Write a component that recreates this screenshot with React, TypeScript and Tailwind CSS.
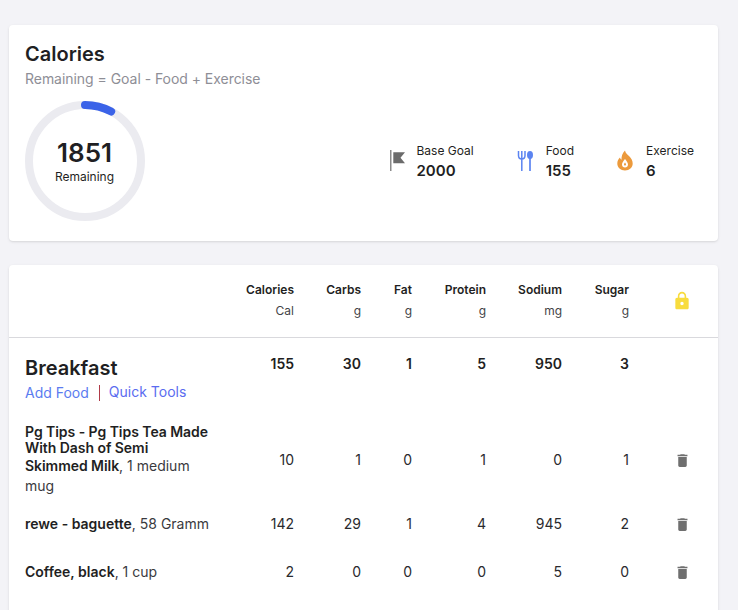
const rows = [
  { bold: 'Pg Tips - Pg Tips Tea Made With Dash of Semi Skimmed Milk', rest: ', 1 medium mug', vals: [10, 1, 0, 1, 0, 1] },
  { bold: 'rewe - baguette', rest: ', 58 Gramm', vals: [142, 29, 1, 4, 945, 2] },
  { bold: 'Coffee, black', rest: ', 1 cup', vals: [2, 0, 0, 0, 5, 0] },
];

const headers = [
  { label: 'Calories', unit: 'Cal' },
  { label: 'Carbs', unit: 'g' },
  { label: 'Fat', unit: 'g' },
  { label: 'Protein', unit: 'g' },
  { label: 'Sodium', unit: 'mg' },
  { label: 'Sugar', unit: 'g' },
];

const totals = [155, 30, 1, 5, 950, 3];
const gridCols = 'grid grid-cols-[221px_48px_67px_51px_74px_76px_67px_1fr]';

function FlagIcon() {
  return (
    <svg width="16" height="22" viewBox="0 0 16 22" className="shrink-0">
      <rect x="0" y="0" width="1.500" height="21" fill="#8a8a8a" />
      <path d="M3.300 2.300H15l-4.500 5.500 4.500 5.500H3.300z" fill="#6b6b6b" />
    </svg>
  );
}

function ForkIcon() {
  return (
    <svg width="18" height="22" viewBox="0 0 18 22" className="shrink-0" fill="none" stroke="#5b84f1" strokeWidth="1.500">
      <path d="M1.500 1v4.500c0 2.100 1.400 3.500 3.300 3.500S8 7.600 8 5.500V1M4.800 1v20" />
      <path d="M13 8v13" strokeWidth="1.700" />
      <ellipse cx="13" cy="5" rx="3" ry="4" fill="#5b84f1" stroke="none" />
    </svg>
  );
}

function FlameIcon() {
  return (
    <svg width="18" height="22" viewBox="0 0 18 22" className="shrink-0">
      <path
        fillRule="evenodd"
        d="M8 .5c.5 2.500 2 3.500 4 5.500 2.300 2.300 3.700 4.500 3.700 7.500 0 4-3.300 7-7.700 7S.3 17.500.3 13.500c0-2.500 1-4.500 2.700-6 .2 1 .6 1.800 1.500 2.200C4.300 6.200 5.500 3 8 .5zM8 9c-1.700 2.300-3 3.600-3 5.500 0 1.800 1.300 3 3 3s3-1.200 3-3c0-1.900-1.300-3.200-3-5.500zm0 3.500c-.6.800-1 1.300-1 2 0 .6.400 1 1 1s1-.4 1-1c0-.7-.4-1.200-1-2z"
        fill="#ec9a3c"
      />
    </svg>
  );
}

function LockIcon() {
  return (
    <svg width="20" height="20" viewBox="0 0 24 24" fill="#f8dc3d">
      <path d="M18 8h-1V6c0-2.760-2.240-5-5-5S7 3.240 7 6v2H6c-1.100 0-2 .9-2 2v10c0 1.100.9 2 2 2h12c1.100 0 2-.9 2-2V10c0-1.100-.9-2-2-2zm-6 9c-1.100 0-2-.9-2-2s.9-2 2-2 2 .9 2 2-.9 2-2 2zm3.100-9H8.900V6c0-1.710 1.390-3.100 3.100-3.100 1.710 0 3.100 1.390 3.100 3.100v2z" />
    </svg>
  );
}

function TrashIcon() {
  return (
    <svg width="17" height="17" viewBox="0 0 24 24" fill="#6f6f6f">
      <path d="M6 19c0 1.100.9 2 2 2h8c1.100 0 2-.9 2-2V7H6v12zM19 4h-3.500l-1-1h-5l-1 1H5v2h14V4z" />
    </svg>
  );
}

function Stat({ icon, label, value }: { icon: React.ReactNode; label: string; value: number }) {
  return (
    <div className="flex items-center gap-[11px]">
      {icon}
      <div>
        <div className="text-xs leading-5 text-[#1f1f23]">{label}</div>
        <div className="text-[15px] leading-5 font-semibold text-[#1f1f23]">{value}</div>
      </div>
    </div>
  );
}

export default function App() {
  return (
    <div
      className="h-screen overflow-hidden bg-[#f3f3f7] pt-[25px] pr-5 pl-[9px] text-[#1f1f23]"
      style={{ fontFamily: 'Inter, sans-serif' }}
    >
      <div className="h-[216px] rounded bg-white px-4 pt-[17px] shadow-sm">
        <h2 className="text-xl leading-6 font-semibold">Calories</h2>
        <p className="mt-[3px] text-sm leading-5 tracking-[-0.04px] text-[#8e8e96]">Remaining = Goal - Food + Exercise</p>
        <div className="mt-3 flex items-center pr-2">
          <div className="relative h-[120px] w-[120px]">
            <svg width="120" height="120" viewBox="0 0 120 120">
              <circle cx="60" cy="60" r="56" fill="none" stroke="#ebebf0" strokeWidth="8" />
              <path d="M60 4A56 56 0 0 1 86.200 10.500" fill="none" stroke="#3b63e8" strokeWidth="8" strokeLinecap="round" />
            </svg>
            <div className="absolute inset-0 flex flex-col items-center justify-center pr-px">
              <div className="text-[26px] leading-8 font-semibold">1851</div>
              <div className="text-xs leading-4">Remaining</div>
            </div>
          </div>
          <div className="ml-auto flex items-center gap-[43px]">
            <Stat icon={<FlagIcon />} label="Base Goal" value={2000} />
            <Stat icon={<ForkIcon />} label="Food" value={155} />
            <Stat icon={<FlameIcon />} label="Exercise" value={6} />
          </div>
        </div>
      </div>

      <div className="mt-6 rounded bg-white pb-6 shadow-sm">
        <div className={`${gridCols} h-[73px] border-b border-[#d9d9dd] pt-[15px] pl-4`}>
          <div />
          {headers.map((h) => (
            <div key={h.label} className="text-right">
              <div className="text-xs leading-5 font-semibold">{h.label}</div>
              <div className="mt-px text-xs leading-5 text-[#444448]">{h.unit}</div>
            </div>
          ))}
          <div className="flex justify-center pt-[11px] pl-[17px]">
            <LockIcon />
          </div>
        </div>

        <div className={`${gridCols} h-[82px] pt-4 pl-4`}>
          <div>
            <h3 className="text-xl leading-7 font-semibold">Breakfast</h3>
            <div className="mt-px flex items-center text-sm leading-5">
              <span className="text-[#5b7cf0]">Add Food</span>
              <span className="mr-[9px] ml-2.5 h-4 w-px bg-[#b03a48]" />
              <span className="-mt-0.5 text-[#5b6cf0]">Quick Tools</span>
            </div>
          </div>
          {totals.map((t, i) => (
            <div key={i} className="text-right text-sm leading-5 font-semibold">
              {t}
            </div>
          ))}
          <div />
        </div>

        {rows.map((r, i) => (
          <div key={i} className={`${gridCols} ${i === 0 ? 'h-20' : 'h-12'} items-center pl-4`}>
            <div className="w-[186px] text-sm leading-4">
              <span className={i === 0 ? 'font-semibold tracking-[-0.05px]' : 'font-semibold'}>{r.bold}</span>
              <span className="leading-5 text-[#3a3a3e]">{r.rest}</span>
            </div>
            {r.vals.map((v, j) => (
              <div key={j} className="text-right text-sm leading-5 text-[#2a2a2e]">
                {v}
              </div>
            ))}
            <div className="flex justify-center pl-[17px]">
              <TrashIcon />
            </div>
          </div>
        ))}
      </div>
    </div>
  );
}
